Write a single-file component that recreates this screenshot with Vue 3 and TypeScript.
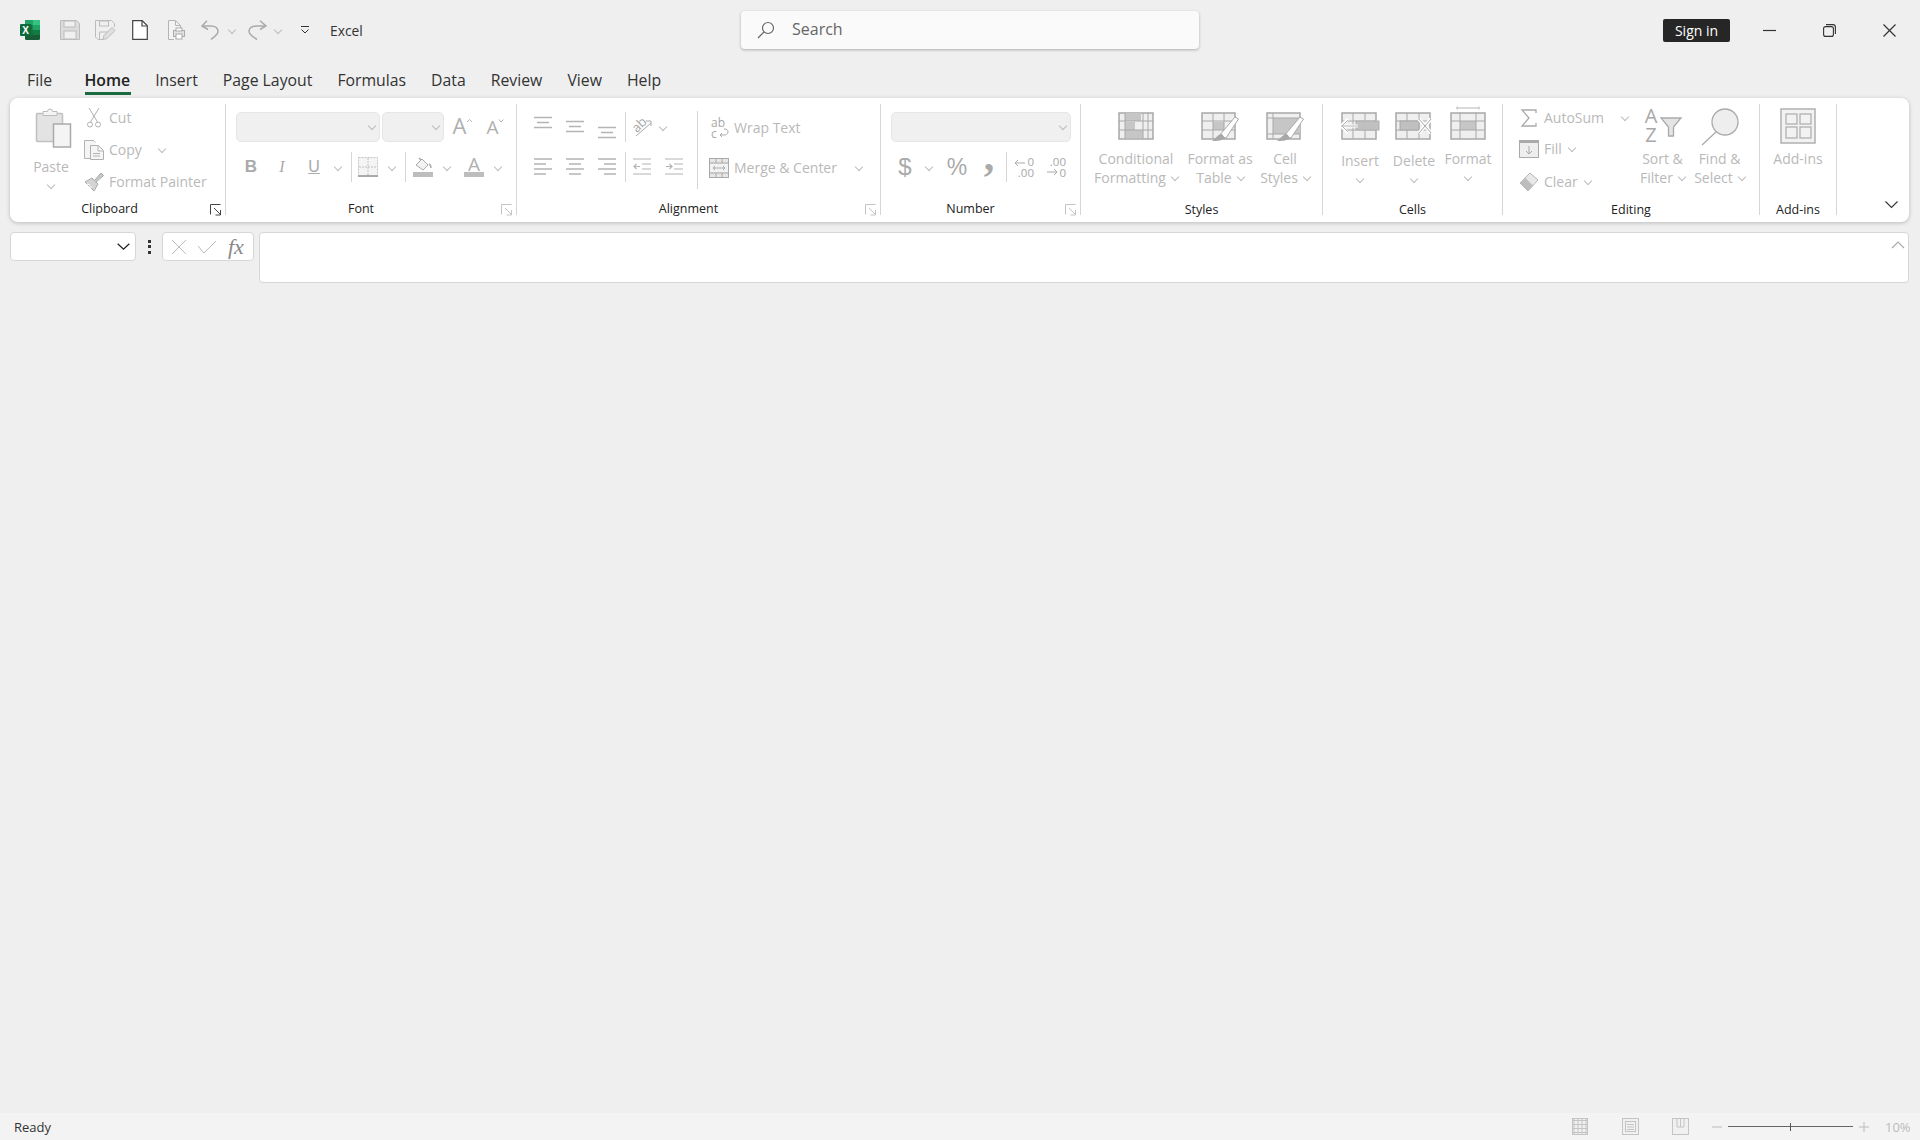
<script setup lang="ts">
const tabs = ["File", "Home", "Insert", "Page Layout", "Formulas", "Data", "Review", "View", "Help"];
const normalCells = [0, 1, 2, 3];
</script>

<template>
  <div class="app">
    <header class="titlebar">
      <div class="qat">
        <svg class="q-logo" width="20" height="20" viewBox="0 0 20 20">
          <rect x="5" y="0" width="15" height="20" rx="1.5" fill="#185c37" />
          <rect x="5" y="0" width="7.5" height="5" fill="#21a366" />
          <path d="M12.5 0H18.5a1.5 1.5 0 0 1 1.5 1.5V5H12.5z" fill="#33c481" />
          <rect x="5" y="5" width="7.5" height="10" fill="#107c41" />
          <rect x="12.5" y="5" width="7.5" height="5" fill="#21a366" />
          <rect x="12.5" y="10" width="7.5" height="5" fill="#107c41" />
          <rect x="0" y="4" width="11.5" height="12" rx="1" fill="#0f6b3c" />
          <text x="5.7" y="13.5" text-anchor="middle" class="logo-x">X</text>
        </svg>
        <svg class="q-save" width="20" height="20" viewBox="0 0 20 20">
          <path d="M.5.5h16l3 3v16H.5z" fill="#dcdcdc" stroke="#bcbcbc" />
          <rect x="4" y="1" width="11" height="6" fill="#f0f0f0" stroke="#bcbcbc" />
          <rect x="4" y="11" width="12" height="8" fill="#f0f0f0" stroke="#bcbcbc" />
        </svg>
        <svg class="q-saveas" width="20" height="20" viewBox="0 0 20 20">
          <path d="M8 19.5H3l-2.5-2.500V.5h16l3 3V7" fill="none" stroke="#bcbcbc" />
          <rect x="4.5" y="1" width="9" height="5" fill="none" stroke="#bcbcbc" />
          <path d="M4.5 19v-7h8" fill="none" stroke="#bcbcbc" />
          <path d="M8 19.5l1-4 8-8 3 3-8 8z" fill="#e0e0e0" stroke="#bcbcbc" />
        </svg>
        <svg class="q-new" width="16" height="20" viewBox="0 0 16 20">
          <path d="M.7.7h9.500l5.100 5.100v13.500H.7z" fill="#fff" stroke="#444" stroke-width="1.200" />
          <path d="M10 1v5h5" fill="none" stroke="#444" stroke-width="1.200" />
        </svg>
        <svg class="q-print" width="17" height="20" viewBox="0 0 17 20">
          <path d="M6 19.5H.5V.5h7l5 5v3" fill="#f3f3f3" stroke="#b4b4b4" />
          <path d="M7.5 1v4.500h5" fill="none" stroke="#b4b4b4" />
          <rect x="5.5" y="10.5" width="11" height="6" fill="#e2e2e2" stroke="#aaa" />
          <rect x="8" y="8" width="6" height="3" fill="#fff" stroke="#aaa" />
          <rect x="8" y="14" width="6" height="5" fill="#fff" stroke="#aaa" />
        </svg>
        <svg class="q-undo" width="18" height="20" viewBox="0 0 18 20">
          <path d="M6 .8L1 6l6 3.500" fill="none" stroke="#aaa" stroke-width="1.500" />
          <path d="M1.500 6H10c4 0 7 2 7 5.500 0 3-4 5.500-7 8" fill="none" stroke="#aaa" stroke-width="1.500" />
        </svg>
        <span class="chev q-c1"></span>
        <svg class="q-redo" width="19" height="20" viewBox="0 0 19 20">
          <path d="M12 .8l6 5.200-6 3.500" fill="none" stroke="#aaa" stroke-width="1.500" />
          <path d="M17.500 6H9C4 6 1 8 1 11.500c0 3 4 5.500 8 8" fill="none" stroke="#aaa" stroke-width="1.500" />
        </svg>
        <span class="chev q-c2"></span>
        <svg class="q-cust" width="8" height="8" viewBox="0 0 8 8">
          <path d="M0 .5h8M.5 3.500L4 7l3.500-3.500" fill="none" stroke="#333" stroke-width="1" />
        </svg>
        <span class="app-name">Excel</span>
      </div>
      <div class="search">
        <svg width="18" height="18" viewBox="0 0 18 18">
          <circle cx="11" cy="7" r="5.500" fill="none" stroke="#666" stroke-width="1.200" />
          <path d="M7 11l-6 6" stroke="#666" stroke-width="1.200" />
        </svg>
        <span>Search</span>
      </div>
      <button class="signin">Sign in</button>
      <svg class="win-min" width="13" height="13" viewBox="0 0 13 13"><path d="M0 6.500h13" stroke="#333" stroke-width="1.200" /></svg>
      <svg class="win-max" width="13" height="13" viewBox="0 0 13 13">
        <rect x=".6" y="2.600" width="9.800" height="9.800" rx="2" fill="none" stroke="#333" stroke-width="1.100" />
        <path d="M3 .6h7a2.500 2.500 0 0 1 2.400 2.400v7" fill="none" stroke="#333" stroke-width="1.100" />
      </svg>
      <svg class="win-close" width="13" height="13" viewBox="0 0 13 13"><path d="M.5.5l12 12M12.500.5l-12 12" stroke="#333" stroke-width="1.200" /></svg>
    </header>

    <nav class="tabs">
      <span v-for="tab in tabs" :key="tab" class="tab" :class="{ active: tab === 'Home' }">{{ tab }}</span>
    </nav>

    <section class="ribbon">
      <!-- Clipboard -->
      <div class="group g-clipboard">
        <div class="body">
          <div class="big paste">
            <svg width="36" height="40" viewBox="0 0 36 40">
              <rect x=".5" y="5.500" width="26" height="28" rx="1" fill="#e3e3e3" stroke="#c0c0c0" stroke-width="1.500" />
              <path d="M7 6.500V3.500h4.500a2.500 2.500 0 0 1 5 0H21v4H7z" fill="#f4f4f4" stroke="#bcbcbc" />
              <rect x="17.500" y="16" width="17" height="23" fill="#f4f4f4" stroke="#aaa" stroke-width="1.500" />
            </svg>
            <span class="lbl paste-lbl">Paste</span>
            <span class="chev"></span>
          </div>
          <div class="rows">
            <div class="row">
              <span class="r-ic">
                <svg width="14" height="20" viewBox="0 0 14 20">
                  <path d="M2 0l8.500 14M12 0L3.500 14" stroke="#b0b0b0" fill="none" />
                  <circle cx="3" cy="16.500" r="2.500" fill="none" stroke="#b0b0b0" />
                  <circle cx="11" cy="16.500" r="2.500" fill="none" stroke="#b0b0b0" />
                </svg>
              </span>
              <span class="lbl">Cut</span>
            </div>
            <div class="row">
              <span class="r-ic">
                <svg width="20" height="20" viewBox="0 0 20 20">
                  <path d="M6 18.500H.5V.5h9l2 2" fill="#f5f5f5" stroke="#b4b4b4" />
                  <path d="M6.500 5.500h8l5 5v9h-13z" fill="#f5f5f5" stroke="#b0b0b0" />
                  <path d="M14 6v5h5M9 13.500h7M9 16h7" fill="none" stroke="#b4b4b4" />
                </svg>
              </span>
              <span class="lbl">Copy</span>
              <span class="chev copy-chev"></span>
            </div>
            <div class="row">
              <span class="r-ic">
                <svg width="20" height="20" viewBox="0 0 20 20">
                  <path d="M1 10l7-4 6 6-4 7z" fill="#d4d4d4" stroke="#aaa" />
                  <path d="M10 9l7-8 2.500 2.500-8 7" fill="#c8c8c8" stroke="#aaa" />
                  <path d="M3 12l3 1M5 15l3 0" stroke="#fff" />
                </svg>
              </span>
              <span class="lbl">Format Painter</span>
            </div>
          </div>
        </div>
        <div class="foot">
          <span class="title">Clipboard</span>
          <svg class="launch" width="12" height="12" viewBox="0 0 12 12">
            <path d="M.5 10.500v-10h10M4 4l6 6M10.500 6v5h-5" fill="none" stroke="#444" />
          </svg>
        </div>
      </div>

      <!-- Font -->
      <div class="group g-font">
        <div class="body col">
          <div class="font-r1">
            <div class="combo w144"><span class="chev"></span></div>
            <div class="combo w62"><span class="chev"></span></div>
            <svg class="grow" width="20" height="20" viewBox="0 0 20 20">
              <text x="7.500" y="17" text-anchor="middle" class="sv-a big-a">A</text>
              <path d="M15 5l2.500-2.500L20 5" fill="none" stroke="#b4b4b4" />
            </svg>
            <svg class="shrink" width="18" height="20" viewBox="0 0 18 20">
              <text x="6.500" y="17" text-anchor="middle" class="sv-a mid-a">A</text>
              <path d="M13 2.500L15 5l2.500-2.500" fill="none" stroke="#b4b4b4" />
            </svg>
          </div>
          <div class="font-r2">
            <span class="g-b">B</span>
            <span class="g-i">I</span>
            <span class="g-u">U</span>
            <span class="chev"></span>
            <span class="vsep"></span>
            <svg width="20" height="20" viewBox="0 0 20 20">
              <rect x=".5" y=".5" width="19" height="19" fill="#f4f4f4" stroke="#c4c4c4" stroke-dasharray="2 1" />
              <path d="M10 1v18M1 10h18" stroke="#c0c0c0" stroke-dasharray="2 1" />
              <path d="M0 19h20" stroke="#aaa" stroke-width="2" />
            </svg>
            <span class="chev"></span>
            <span class="vsep"></span>
            <svg width="20" height="20" viewBox="0 0 20 20">
              <path d="M3 8l6-6 6 6-5 5z" fill="#f2f2f2" stroke="#aaa" />
              <path d="M8 3L6 1M16 7c2 1 2 3 2 4" fill="none" stroke="#aaa" stroke-width="1.500" />
              <rect x="0" y="15" width="20" height="5" fill="#bdbdbd" />
            </svg>
            <span class="chev"></span>
            <svg width="20" height="20" viewBox="0 0 20 20">
              <text x="10" y="13.500" text-anchor="middle" class="sv-a mid-a">A</text>
              <rect x="0" y="15" width="20" height="5" fill="#bdbdbd" />
            </svg>
            <span class="chev"></span>
          </div>
        </div>
        <div class="foot">
          <span class="title">Font</span>
          <svg class="launch" width="12" height="12" viewBox="0 0 12 12">
            <path d="M.5 10.500v-10h10M4 4l6 6M10.500 6v5h-5" fill="none" stroke="#c4c4c4" />
          </svg>
        </div>
      </div>

      <!-- Alignment -->
      <div class="group g-align">
        <div class="body">
          <div class="al-grid">
            <div class="al-r1">
              <svg width="18" height="24" viewBox="0 0 18 24"><path d="M0 2.500h18M3 7.500h12M0 12.500h18" stroke="#b4b4b4" stroke-width="1.300" /></svg>
              <svg width="18" height="24" viewBox="0 0 18 24"><path d="M0 6.500h18M3 11.500h12M0 16.500h18" stroke="#b4b4b4" stroke-width="1.300" /></svg>
              <svg width="18" height="24" viewBox="0 0 18 24"><path d="M0 12.500h18M3 17.500h12M0 22.500h18" stroke="#b4b4b4" stroke-width="1.300" /></svg>
              <span class="vsep"></span>
              <svg width="20" height="20" viewBox="0 0 20 20">
                <text x="1" y="13" transform="rotate(-45 7 10)" class="sv-t ab">ab</text>
                <path d="M4 19L19 6M14 4h5v5" fill="none" stroke="#aaa" />
              </svg>
              <span class="chev"></span>
            </div>
            <div class="al-r2">
              <svg width="18" height="18" viewBox="0 0 18 18"><path d="M0 1h18M0 6h12M0 11h18M0 16h12" stroke="#b4b4b4" stroke-width="1.300" /></svg>
              <svg width="18" height="18" viewBox="0 0 18 18"><path d="M0 1h18M3 6h12M0 11h18M3 16h12" stroke="#b4b4b4" stroke-width="1.300" /></svg>
              <svg width="18" height="18" viewBox="0 0 18 18"><path d="M0 1h18M6 6h12M0 11h18M6 16h12" stroke="#b4b4b4" stroke-width="1.300" /></svg>
              <span class="vsep"></span>
              <svg width="18" height="18" viewBox="0 0 18 18"><path d="M0 1h18M9 6h9M9 11h9M0 16h18M1 8.500h6M3.500 6L1 8.500 3.500 11" fill="none" stroke="#b4b4b4" stroke-width="1.200" /></svg>
              <svg width="18" height="18" viewBox="0 0 18 18"><path d="M0 1h18M9 6h9M9 11h9M0 16h18M1 8.500h6M4.500 6L7 8.500 4.500 11" fill="none" stroke="#b4b4b4" stroke-width="1.200" /></svg>
            </div>
          </div>
          <span class="vsep tall"></span>
          <div class="wrap-col">
            <div class="row">
              <span class="r-ic">
                <svg width="20" height="22" viewBox="0 0 20 22">
                  <text x="2" y="9.500" class="sv-t ab2">ab</text>
                  <text x="2" y="20.500" class="sv-t ab2">c</text>
                  <path d="M15 12c3 0 4 1 4 3s-2 3-4 3h-4M13 16l-2 2 2 2" fill="none" stroke="#aaa" />
                </svg>
              </span>
              <span class="lbl">Wrap Text</span>
            </div>
            <div class="row merge">
              <span class="r-ic">
                <svg width="20" height="20" viewBox="0 0 20 20">
                  <rect x=".5" y=".5" width="19" height="19" fill="#e6e6e6" stroke="#aaa" />
                  <path d="M1 5h18M1 15h18M7 1v4M13 1v4M7 15v4M13 15v4" stroke="#aaa" />
                  <rect x="1" y="6" width="18" height="8" fill="#f2f2f2" />
                  <path d="M4 10h12M6 8l-2 2 2 2M14 8l2 2-2 2" fill="none" stroke="#aaa" />
                </svg>
              </span>
              <span class="lbl">Merge &amp; Center</span>
              <span class="chev merge-chev"></span>
            </div>
          </div>
        </div>
        <div class="foot">
          <span class="title">Alignment</span>
          <svg class="launch" width="12" height="12" viewBox="0 0 12 12">
            <path d="M.5 10.500v-10h10M4 4l6 6M10.500 6v5h-5" fill="none" stroke="#c4c4c4" />
          </svg>
        </div>
      </div>

      <!-- Number -->
      <div class="group g-number">
        <div class="body col">
          <div class="combo w180"><span class="chev"></span></div>
          <div class="num-r2">
            <span class="g-dollar">$</span>
            <span class="chev"></span>
            <span class="g-pct">%</span>
            <span class="g-comma">,</span>
            <span class="vsep"></span>
            <svg width="20" height="20" viewBox="0 0 20 20">
              <text x="20" y="8.500" text-anchor="end" class="sv-t dec">0</text>
              <text x="20" y="19.500" text-anchor="end" class="sv-t dec">.00</text>
              <path d="M1 6h10M4 3L1 6l3 3" fill="none" stroke="#aaa" />
            </svg>
            <svg width="20" height="20" viewBox="0 0 20 20">
              <text x="20" y="8.500" text-anchor="end" class="sv-t dec">.00</text>
              <text x="20" y="19.500" text-anchor="end" class="sv-t dec">0</text>
              <path d="M1 15h10M8 12l3 3-3 3" fill="none" stroke="#aaa" />
            </svg>
          </div>
        </div>
        <div class="foot">
          <span class="title">Number</span>
          <svg class="launch" width="12" height="12" viewBox="0 0 12 12">
            <path d="M.5 10.500v-10h10M4 4l6 6M10.500 6v5h-5" fill="none" stroke="#c4c4c4" />
          </svg>
        </div>
      </div>

      <!-- Styles -->
      <div class="group g-styles">
        <div class="body">
          <div class="big w90">
            <svg width="36" height="28" viewBox="0 0 36 28">
              <rect x="1" y="1" width="34" height="26" fill="#efefef" stroke="#a8a8a8" stroke-width="1.500" />
              <rect x="7" y="1" width="16" height="8" fill="#c6c6c6" />
              <rect x="7" y="10" width="10" height="8" fill="#c6c6c6" />
              <rect x="7" y="18" width="18" height="8" fill="#c6c6c6" />
              <path d="M7 1v26M25 1v26M30 1v26M1 9h34M1 18h34" stroke="#a8a8a8" fill="none" />
            </svg>
            <span class="lbl">Conditional</span>
            <span class="lbl">Formatting<i class="chev in"></i></span>
          </div>
          <div class="big w78">
            <svg width="38" height="30" viewBox="0 0 38 30">
              <rect x="1" y="1" width="33" height="26" fill="#efefef" stroke="#a8a8a8" stroke-width="1.500" />
              <rect x="12" y="10" width="11" height="8" fill="#c6c6c6" />
              <path d="M12 1v26M23 1v26M1 9h33M1 18h33" stroke="#a8a8a8" fill="none" />
              <path d="M18 24L34 5l3.500 2L25 26z" fill="#fff" stroke="#a8a8a8" />
              <path d="M11 29c5 0 9 0 13-3l-3-4c-4 0-6 4-10 7z" fill="#a8a8a8" />
            </svg>
            <span class="lbl">Format as</span>
            <span class="lbl">Table<i class="chev in"></i></span>
          </div>
          <div class="big w52">
            <svg width="38" height="30" viewBox="0 0 38 30">
              <rect x="1" y="1" width="33" height="26" fill="#efefef" stroke="#a8a8a8" stroke-width="1.500" />
              <rect x="7" y="6" width="27" height="16" fill="#c6c6c6" />
              <path d="M7 1v26M1 6h33M1 22h33" stroke="#a8a8a8" fill="none" />
              <path d="M18 24L34 5l3.500 2L25 26z" fill="#fff" stroke="#a8a8a8" />
              <path d="M11 29c5 0 9 0 13-3l-3-4c-4 0-6 4-10 7z" fill="#a8a8a8" />
            </svg>
            <span class="lbl">Cell</span>
            <span class="lbl">Styles<i class="chev in"></i></span>
          </div>
        </div>
        <div class="foot low">
          <span class="title">Styles</span>
        </div>
      </div>

      <!-- Cells -->
      <div class="group g-cells">
        <div class="body">
          <div class="big w54 low-lbl">
            <svg width="40" height="28" viewBox="0 0 40 28">
              <rect x="2" y="1" width="34" height="26" fill="#efefef" stroke="#a8a8a8" stroke-width="1.500" />
              <path d="M13 1v26M25 1v26M2 9h34M2 18h34" stroke="#a8a8a8" fill="none" />
              <rect x="16" y="9" width="23" height="9" fill="#c0c0c0" stroke="#b0b0b0" />
              <path d="M1 14h17M8 7l-7 7 7 7" fill="none" stroke="#fff" stroke-width="3" />
              <path d="M1 14h17M8 8l-6 6 6 6" fill="none" stroke="#b4b4b4" />
            </svg>
            <span class="lbl">Insert</span>
            <span class="chev"></span>
          </div>
          <div class="big w54 low-lbl">
            <svg width="38" height="28" viewBox="0 0 38 28">
              <rect x="1" y="1" width="34" height="26" fill="#efefef" stroke="#a8a8a8" stroke-width="1.500" />
              <path d="M12 1v26M24 1v26M1 9h34M1 18h34" stroke="#a8a8a8" fill="none" />
              <rect x="5" y="9" width="19" height="9" fill="#c0c0c0" stroke="#a8a8a8" />
              <path d="M24 7l12 14M36 7L24 21" stroke="#fff" stroke-width="3.500" />
              <path d="M24 7l12 14M36 7L24 21" stroke="#a8a8a8" />
            </svg>
            <span class="lbl">Delete</span>
            <span class="chev"></span>
          </div>
          <div class="big w54 fmt">
            <svg width="36" height="34" viewBox="0 0 36 34">
              <path d="M7 .5v3M29 .5v3M7 2h22" stroke="#b4b4b4" fill="none" />
              <rect x="1" y="7" width="34" height="26" fill="#efefef" stroke="#a8a8a8" stroke-width="1.500" />
              <rect x="10" y="15" width="16" height="9" fill="#c6c6c6" />
              <path d="M10 7v26M26 7v26M1 15h34M1 24h34" stroke="#a8a8a8" fill="none" />
            </svg>
            <span class="lbl">Format</span>
            <span class="chev"></span>
          </div>
        </div>
        <div class="foot low">
          <span class="title">Cells</span>
        </div>
      </div>

      <!-- Editing -->
      <div class="group g-editing">
        <div class="body">
          <div class="rows edit-rows">
            <div class="row">
              <span class="r-ic">
                <svg width="16" height="18" viewBox="0 0 16 18"><path d="M15 4V1H1l7 8-7 8h14v-3" fill="none" stroke="#aaa" stroke-width="1.300" /></svg>
              </span>
              <span class="lbl">AutoSum</span>
              <span class="chev sum-chev"></span>
            </div>
            <div class="row fill">
              <span class="r-ic">
                <svg width="20" height="18" viewBox="0 0 20 18">
                  <rect x=".5" y=".5" width="19" height="17" fill="#eee" stroke="#aaa" />
                  <rect x="0" y="0" width="20" height="3" fill="#aaa" />
                  <path d="M10 6v8M7 11l3 3 3-3" fill="none" stroke="#aaa" />
                </svg>
              </span>
              <span class="lbl">Fill</span>
              <span class="chev side"></span>
            </div>
            <div class="row">
              <span class="r-ic">
                <svg width="20" height="20" viewBox="0 0 20 20">
                  <path d="M1 11L11 1l8 7-10 11z" fill="#e8e8e8" stroke="#b4b4b4" />
                  <path d="M1 11l8 8 5-5.500-8-8z" fill="#bdbdbd" />
                </svg>
              </span>
              <span class="lbl">Clear</span>
              <span class="chev side"></span>
            </div>
          </div>
          <div class="big w57">
            <svg width="36" height="38" viewBox="0 0 36 38">
              <text x="6" y="15" text-anchor="middle" class="sv-t az">A</text>
              <text x="6" y="34" text-anchor="middle" class="sv-t az">Z</text>
              <path d="M16 10h20l-7.500 9v9h-5v-9z" fill="#e4e4e4" stroke="#aaa" stroke-width="1.300" />
            </svg>
            <span class="lbl">Sort &amp;</span>
            <span class="lbl">Filter<i class="chev in"></i></span>
          </div>
          <div class="big w57">
            <svg width="38" height="38" viewBox="0 0 38 38">
              <circle cx="24" cy="14" r="13" fill="#eee" stroke="#aaa" stroke-width="1.300" />
              <path d="M15 24L1 37" stroke="#aaa" stroke-width="1.300" />
            </svg>
            <span class="lbl">Find &amp;</span>
            <span class="lbl">Select<i class="chev in"></i></span>
          </div>
        </div>
        <div class="foot low">
          <span class="title">Editing</span>
        </div>
      </div>

      <!-- Add-ins -->
      <div class="group g-addins">
        <div class="body">
          <div class="big w77">
            <svg width="36" height="36" viewBox="0 0 36 36">
              <rect x="1" y="1" width="34" height="34" fill="#f2f2f2" stroke="#b0b0b0" stroke-width="1.500" />
              <rect x="6" y="6" width="11" height="10" fill="none" stroke="#b0b0b0" stroke-width="1.300" />
              <rect x="20" y="6" width="11" height="10" fill="none" stroke="#b0b0b0" stroke-width="1.300" />
              <rect x="6" y="19" width="11" height="11" fill="none" stroke="#b0b0b0" stroke-width="1.300" />
              <rect x="20" y="19" width="11" height="11" fill="none" stroke="#b0b0b0" stroke-width="1.300" />
            </svg>
            <span class="lbl">Add-ins</span>
          </div>
        </div>
        <div class="foot low">
          <span class="title">Add-ins</span>
        </div>
      </div>

      <div class="collapse">
        <svg width="13" height="7" viewBox="0 0 13 7"><path d="M.5.5l6 6 6-6" fill="none" stroke="#333" stroke-width="1.100" /></svg>
      </div>
    </section>

    <section class="formula">
      <div class="namebox">
        <svg width="13" height="7" viewBox="0 0 13 7"><path d="M.7.7l5.800 5.500L12.300.7" fill="none" stroke="#222" stroke-width="1.300" /></svg>
      </div>
      <div class="dots"><i></i><i></i><i></i></div>
      <div class="fxbox">
        <svg width="16" height="16" viewBox="0 0 16 16"><path d="M1 1l14 14M15 1L1 15" stroke="#bbb" /></svg>
        <svg width="20" height="14" viewBox="0 0 20 14"><path d="M1 6l6 7L19 1" fill="none" stroke="#bbb" /></svg>
        <span class="fx">fx</span>
      </div>
      <div class="input">
        <svg width="14" height="8" viewBox="0 0 14 8"><path d="M1 7l6-6 6 6" fill="none" stroke="#aaa" stroke-width="1.200" /></svg>
      </div>
    </section>

    <footer class="status">
      <span class="ready">Ready</span>
      <svg class="s-normal" width="16" height="17" viewBox="0 0 16 17">
        <rect x=".5" y=".5" width="15" height="16" fill="#f0f0f0" stroke="#c4c4c4" />
        <path v-for="n in normalCells" :key="n" :d="`M${n * 4 + 2} 1v15M1 ${n * 4 + 2.5}h14`" stroke="#c4c4c4" />
      </svg>
      <svg class="s-page" width="17" height="17" viewBox="0 0 17 17">
        <rect x=".5" y=".5" width="16" height="16" fill="#f0f0f0" stroke="#c4c4c4" />
        <rect x="3.500" y="3.500" width="10" height="10" fill="none" stroke="#c4c4c4" />
        <path d="M5 6.500h7M5 9h7M5 11.500h7" stroke="#c4c4c4" />
      </svg>
      <svg class="s-break" width="17" height="17" viewBox="0 0 17 17">
        <rect x=".5" y=".5" width="16" height="16" fill="#f0f0f0" stroke="#c4c4c4" />
        <path d="M5 1v8h7V1M8.500 1v8" fill="none" stroke="#c4c4c4" />
      </svg>
      <svg class="s-minus" width="10" height="2" viewBox="0 0 10 2"><path d="M0 1h10" stroke="#bbb" /></svg>
      <div class="slider"><i></i></div>
      <svg class="s-plus" width="10" height="10" viewBox="0 0 10 10"><path d="M0 5h10M5 0v10" stroke="#bbb" /></svg>
      <span class="zoom">10%</span>
    </footer>
  </div>
</template>

<style>
html,
body {
  margin: 0;
  overflow: hidden;
}
</style>

<style scoped>
.app {
  height: 1140px;
  display: flex;
  flex-direction: column;
  background: #efefef;
  font-family: "Open Sans", "Noto Sans", "Liberation Sans", sans-serif;
  color: #333;
}

svg {
  display: block;
  flex: none;
  overflow: visible;
}

.chev {
  display: inline-block;
  width: 5px;
  height: 5px;
  border-right: 1px solid #bcbcbc;
  border-bottom: 1px solid #bcbcbc;
  transform: rotate(45deg);
}

.chev.in {
  margin: 0 0 4px 6px;
  vertical-align: middle;
}

.titlebar {
  height: 60px;
  flex: none;
  display: flex;
  align-items: center;
}

.qat {
  flex: 0 0 741px;
  display: flex;
  align-items: center;
  padding-left: 20px;
  box-sizing: border-box;
}

.logo-x {
  font: 700 10px "Liberation Sans", sans-serif;
  fill: #fff;
}

.q-save { margin-left: 20px; }
.q-saveas { margin-left: 15px; }
.q-new { margin-left: 17px; }
.q-print { margin-left: 20px; }
.q-undo { margin-left: 16px; }
.q-c1 { margin-left: 10px; }
.q-redo { margin-left: 13px; }
.q-c2 { margin-left: 8px; }
.q-cust { margin-left: 20px; }

.app-name {
  margin-left: 21px;
  font-size: 13.800px;
  color: #333;
}

.search {
  width: 458px;
  height: 38px;
  box-sizing: border-box;
  display: flex;
  align-items: center;
  padding-left: 16px;
  gap: 17px;
  background: #fafafa;
  border-radius: 4px;
  box-shadow: 0 1px 3px rgba(0, 0, 0, 0.28);
  font-size: 16px;
  line-height: 20px;
  color: #666;
}

.search span {
  margin-top: -2px;
}

.signin {
  margin-left: 464px;
  width: 67px;
  height: 23px;
  padding: 0;
  border: 0;
  border-radius: 2px;
  background: #262626;
  color: #fff;
  font: 14px "Open Sans", sans-serif;
}

.win-min { margin-left: 33px; }
.win-max { margin-left: 47px; }
.win-close { margin-left: 47px; }

.tabs {
  height: 38px;
  flex: none;
  display: flex;
  align-items: flex-start;
  padding-left: 14.500px;
}

.tab {
  padding: 10px 12.500px 0;
  height: 24px;
  font-size: 15.800px;
  line-height: 20px;
  color: #333;
  white-space: nowrap;
}

.tab:first-child {
  margin-right: 7.500px;
}

.tab.active {
  font-weight: 600;
  background: linear-gradient(#1a6b40, #1a6b40) 12.500px 32px / calc(100% - 25px) 3px no-repeat;
  padding-bottom: 3px;
  color: #222;
}

.ribbon {
  height: 124px;
  flex: none;
  margin: 0 11px 0 10px;
  box-sizing: border-box;
  padding-top: 6px;
  display: flex;
  align-items: flex-start;
  background: #fff;
  border-radius: 8px;
  box-shadow: 0 1px 4px rgba(0, 0, 0, 0.22);
}

.group {
  height: 111px;
  box-sizing: border-box;
  display: flex;
  flex-direction: column;
  border-right: 1px solid #d6d6d6;
}

.g-clipboard { width: 216px; }
.g-font { width: 291px; }
.g-align { width: 364px; }
.g-number { width: 200px; }
.g-styles { width: 242px; }
.g-cells { width: 180px; }
.g-editing { width: 257px; }
.g-addins { width: 77px; }

.body {
  height: 99px;
  display: flex;
  flex: none;
}

.body.col {
  flex-direction: column;
}

.foot {
  display: flex;
  align-items: center;
  height: 12px;
}

.title {
  flex: 1;
  text-align: center;
  font-size: 12.500px;
  line-height: 16px;
  color: #222;
  white-space: nowrap;
}

.foot.low {
  padding-top: 1px;
}

.launch {
  margin: 1px 3px 0 5px;
}

.lbl {
  font-size: 14px;
  line-height: 19px;
  color: #b9b9b9;
  white-space: nowrap;
}

.big {
  display: flex;
  flex-direction: column;
  align-items: center;
  flex: none;
  padding-top: 8px;
}

.big svg + .lbl {
  margin-top: 9px;
}

.paste {
  width: 50px;
  margin-left: 16px;
  padding-top: 4px;
}

.paste svg {
  margin-left: 6px;
}

.big .paste-lbl {
  margin-top: 4px;
}

.paste .chev,
.low-lbl .chev,
.fmt .chev {
  margin-top: 6px;
}

.big.fmt {
  padding-top: 2px;
}

.big.fmt svg + .lbl {
  margin-top: 9px;
}

.low-lbl svg + .lbl {
  margin-top: 11px;
}

.rows {
  margin-left: 8px;
  display: flex;
  flex-direction: column;
  gap: 4px;
}

.row {
  height: 28px;
  display: flex;
  align-items: center;
}

.row .lbl {
  margin-top: -2px;
}

.r-ic {
  width: 20px;
  margin-right: 5px;
  display: flex;
  justify-content: center;
  flex: none;
}

.copy-chev { margin: -3px 0 0 17px; }
.merge-chev { margin: -3px 0 0 19px; }
.sum-chev { margin: -3px 0 0 18px; }
.chev.side { margin: -3px 0 0 7px; }

.g-clipboard .foot .title {
  padding-left: 4px;
}

.combo {
  height: 30px;
  box-sizing: border-box;
  background: #f0f0f0;
  border: 1px solid #e6e6e6;
  border-radius: 5px;
  display: flex;
  align-items: center;
  justify-content: flex-end;
  padding-right: 4px;
  padding-bottom: 3px;
  flex: none;
}

.w144 { width: 144px; }
.w62 { width: 62px; }
.w180 { width: 180px; }

.font-r1 {
  display: flex;
  align-items: center;
  gap: 2px;
  padding: 8px 0 0 10px;
}

.grow { margin-left: 6px; }
.shrink { margin-left: 12px; }

.sv-a {
  font-family: "Open Sans", sans-serif;
  fill: #b0b0b0;
}

.big-a { font-size: 22px; }
.mid-a { font-size: 19px; }

.font-r2 {
  margin: 10px 0 0 10px;
  height: 30px;
  display: grid;
  grid-template-columns: 30px 32px 32px 16px 10px 24px 24px 2px 34px 14px 40px 8px;
  place-items: center;
}

.vsep {
  display: block;
  width: 1px;
  height: 30px;
  background: #d6d6d6;
}

.g-b,
.g-i,
.g-u {
  font-family: "Liberation Sans", sans-serif;
  font-size: 16px;
  color: #aaa;
}

.g-b { font-weight: 700; font-size: 17px; }
.g-i { font-family: "Liberation Serif", serif; font-style: italic; }
.g-u { text-decoration: underline; }

.al-grid {
  margin: 8px 0 0 11px;
  display: flex;
  flex-direction: column;
  gap: 10px;
}

.al-r1,
.al-r2 {
  height: 30px;
  display: grid;
  place-items: center;
}

.al-r1 { grid-template-columns: 30px 34px 30px 6px 28px 14px; }
.al-r2 { grid-template-columns: 30px 34px 30px 6px 27px 38px; }

.sv-t {
  font-family: "Open Sans", sans-serif;
  fill: #a8a8a8;
}

.ab { font-size: 13px; }
.ab2 { font-size: 12px; }
.dec { font-size: 11.500px; }
.az { font-size: 20px; }

.vsep.tall {
  height: 78px;
  margin: 7px 0 0 4px;
}

.wrap-col {
  margin-left: 11px;
  padding-top: 10px;
  display: flex;
  flex-direction: column;
  gap: 12px;
}

.g-number .combo {
  margin: 8px 0 0 10px;
}

.num-r2 {
  margin: 10px 0 0 10px;
  height: 30px;
  display: grid;
  grid-template-columns: 28px 20px 36px 28px 6px 30px 34px;
  place-items: center;
}

.g-dollar {
  font-family: "Liberation Sans", sans-serif;
  font-size: 24px;
  line-height: 30px;
  color: #aaa;
}

.g-pct {
  font-family: "Liberation Sans", sans-serif;
  font-size: 23px;
  line-height: 30px;
  color: #aaa;
}

.g-comma {
  font-family: "Liberation Serif", serif;
  font-weight: 700;
  font-size: 42px;
  line-height: 30px;
  height: 30px;
  margin-top: -22px;
  color: #aaa;
}

.g-styles .body { padding-left: 10px; }
.g-cells .body { padding-left: 10px; }
.w90 { width: 90px; }
.w78 { width: 78px; }
.w52 { width: 52px; }
.w54 { width: 54px; }
.w57 { width: 57px; }
.w77 { width: 76px; }

.g-styles .big svg[height="30"] {
  margin-bottom: -2px;
}

.edit-rows {
  width: 115px;
  margin-left: 16px;
}

.row.fill {
  margin: -1px 0 1px;
}

.big.w57 { padding-top: 4px; }
.big.w77 { padding-top: 4px; }
.big.w77 svg + .lbl { margin-top: 5px; }
.big.w57 svg + .lbl { margin-top: 3px; }

.collapse {
  flex: 1;
  height: 111px;
  box-sizing: border-box;
  display: flex;
  justify-content: flex-end;
  align-items: flex-end;
  padding: 0 11px 7px 0;
}

.formula {
  margin: 10px 11px 0 10px;
  flex: none;
  display: flex;
  align-items: flex-start;
}

.namebox,
.fxbox,
.input {
  box-sizing: border-box;
  background: #fff;
  border: 1px solid #d6d6d6;
  border-radius: 4px;
}

.namebox {
  width: 126px;
  height: 29px;
  display: flex;
  align-items: center;
  justify-content: flex-end;
  padding-right: 5px;
}

.dots {
  width: 26px;
  height: 29px;
  display: flex;
  flex-direction: column;
  align-items: center;
  justify-content: center;
  gap: 2.500px;
}

.dots i {
  width: 3px;
  height: 3px;
  background: #333;
}

.fxbox {
  width: 92px;
  height: 29px;
  display: flex;
  align-items: center;
  padding-left: 8px;
  gap: 10px;
}

.fx {
  margin-left: 1px;
  font: italic 22px "Liberation Serif", serif;
  line-height: 24px;
  color: #888;
}

.input {
  margin-left: 5px;
  flex: 1;
  height: 51px;
  display: flex;
  justify-content: flex-end;
  padding: 8px 3px 0 0;
}

.status {
  margin-top: auto;
  height: 27px;
  flex: none;
  display: flex;
  align-items: center;
  background: #f3f3f3;
  padding-left: 14px;
}

.ready {
  width: 1558px;
  font-size: 13px;
  color: #333;
}

.s-page { margin-left: 34px; }
.s-break { margin-left: 33px; }
.s-minus { margin-left: 23px; }

.slider {
  margin-left: 6px;
  width: 125px;
  height: 1px;
  background: #666;
  display: flex;
  justify-content: center;
  align-items: center;
}

.slider i {
  width: 1px;
  height: 8px;
  background: #555;
}

.s-plus { margin-left: 6px; }

.zoom {
  margin-left: 16px;
  font-size: 13px;
  color: #bbb;
}
</style>
